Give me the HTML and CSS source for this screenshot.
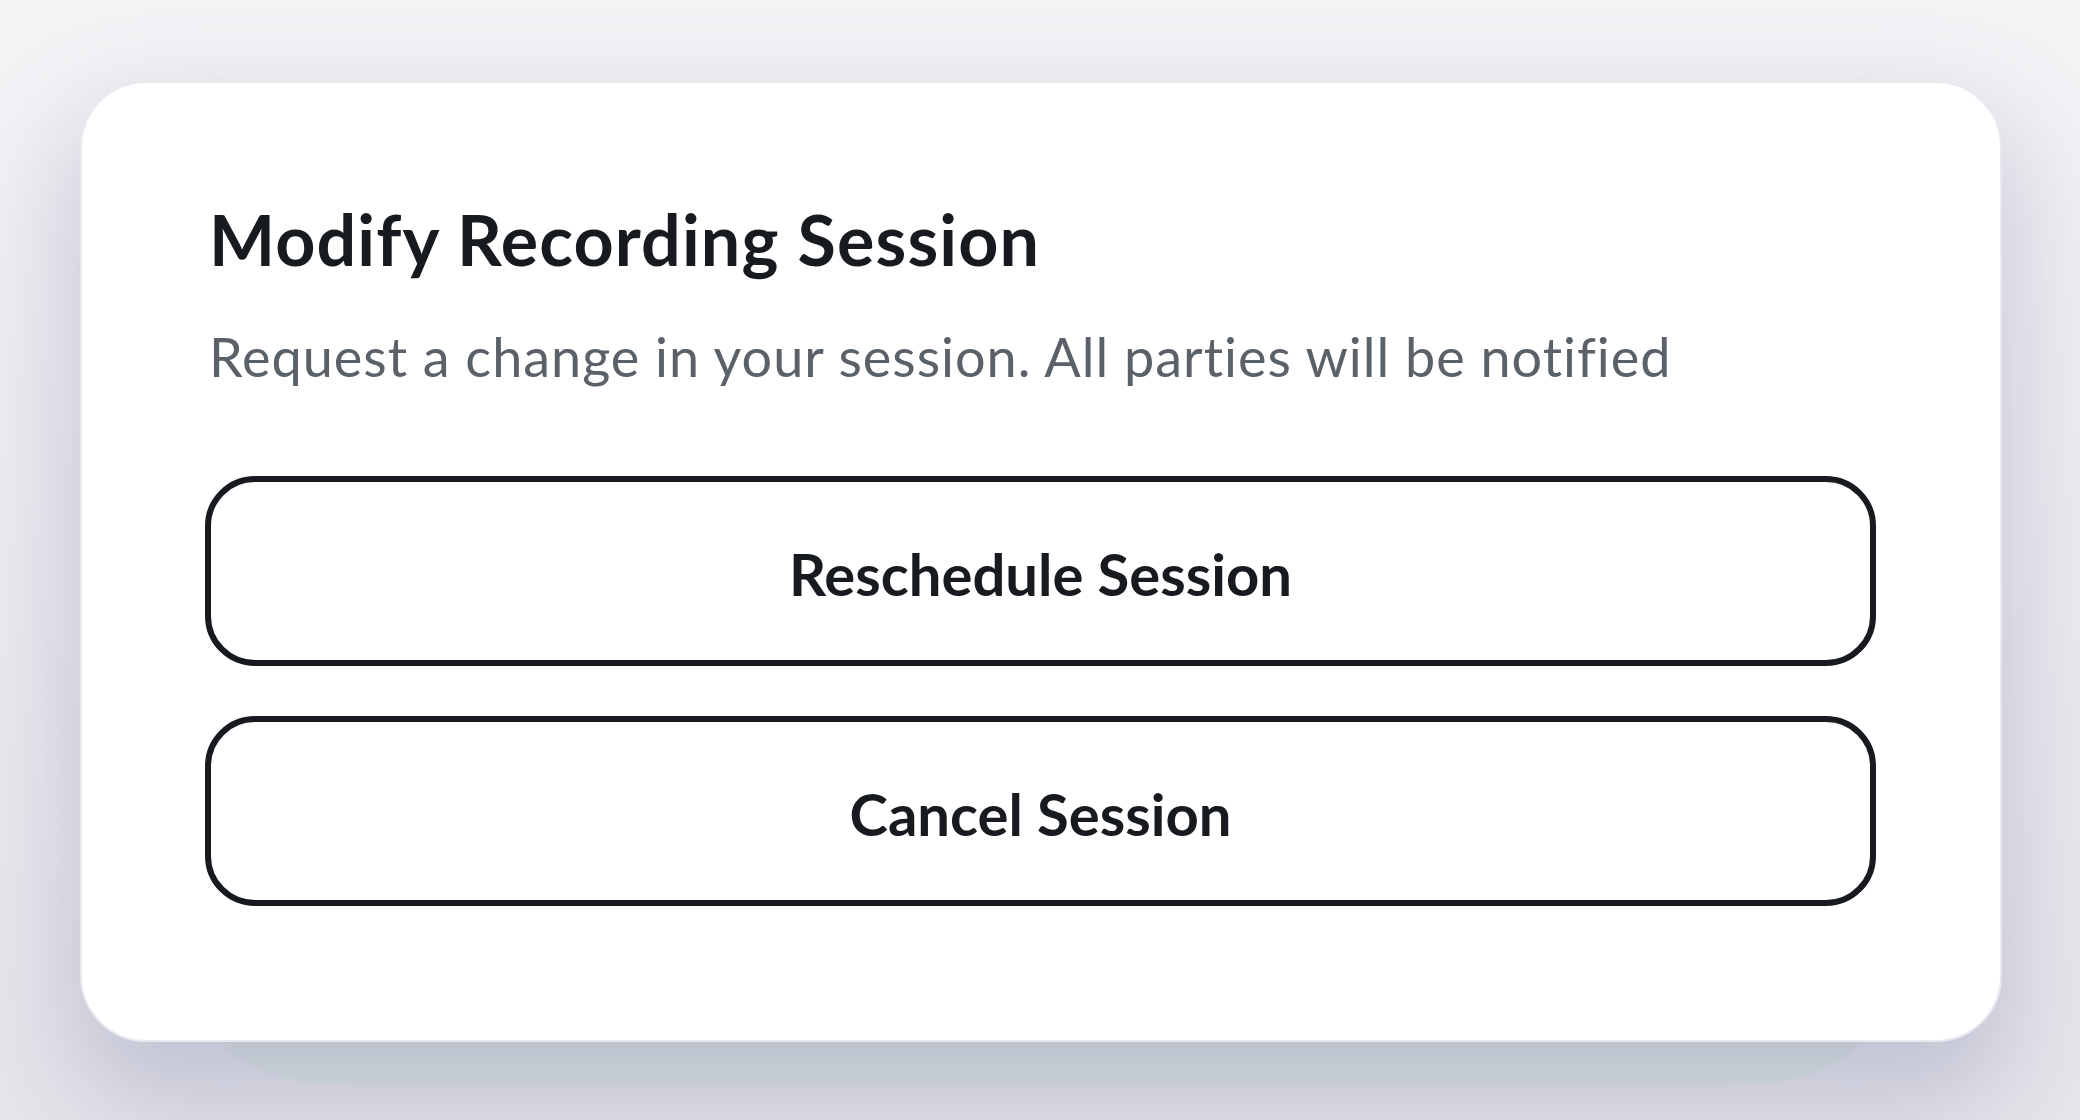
FILE: index.html
```html
<!DOCTYPE html>
<html lang="en">
<head>
<meta charset="utf-8">
<title>Modify Recording Session</title>
<link rel="stylesheet" href="styles.css">
</head>
<body>
<main class="stage">
  <section class="card">
    <h1 class="title">Modify Recording Session</h1>
    <p class="subtitle">Request a change in your session. All parties will be notified</p>
    <div class="actions">
      <button class="btn" type="button">Reschedule Session</button>
      <button class="btn" type="button">Cancel Session</button>
    </div>
  </section>
</main>
</body>
</html>
```
FILE: styles.css
```css
html, body {
  margin: 0;
  padding: 0;
}
body {
  width: 2080px;
  height: 1120px;
  overflow: hidden;
  background: linear-gradient(180deg, #f3f4f6 0%, #e6e7ec 100%);
  font-family: "Lato", "Liberation Sans", sans-serif;
}
.stage {
  padding: 81px 78px 0 80px;
}
.card {
  position: relative;
  box-sizing: border-box;
  width: 1922px;
  height: 961px;
  background: #ffffff;
  border: 2px solid #e8e9ee;
  border-radius: 66px;
  padding: 114px 124px 0 123px;
  box-shadow: 0 50px 110px 12px rgba(95, 95, 140, 0.28);
}
.card::after {
  content: "";
  position: absolute;
  left: 135px;
  right: 135px;
  bottom: -46px;
  height: 300px;
  border-radius: 0 0 140px 140px / 0 0 60px 60px;
  background: linear-gradient(180deg, #d6dde2 0%, #dde7e5 100%);
  z-index: -1;
}
.title {
  margin: 0 0 0 4px;
  font-size: 70px;
  line-height: 1.2;
  font-weight: 700;
  letter-spacing: 1.12px;
  color: #171a1f;
}
.subtitle {
  margin: 44px 0 0 4px;
  font-size: 54px;
  line-height: 1.2;
  font-weight: 400;
  letter-spacing: 0.97px;
  color: #5b6169;
}
.actions {
  display: flex;
  flex-direction: column;
  gap: 50px;
  margin-top: 86px;
}
.btn {
  box-sizing: border-box;
  height: 190px;
  width: 100%;
  border: 6px solid #171a1f;
  border-radius: 50px;
  background: #ffffff;
  color: #171a1f;
  font-family: "Lato", "Liberation Sans", sans-serif;
  font-size: 58px;
  font-weight: 700;
  padding: 5px 0 0;
  cursor: pointer;
}
```
